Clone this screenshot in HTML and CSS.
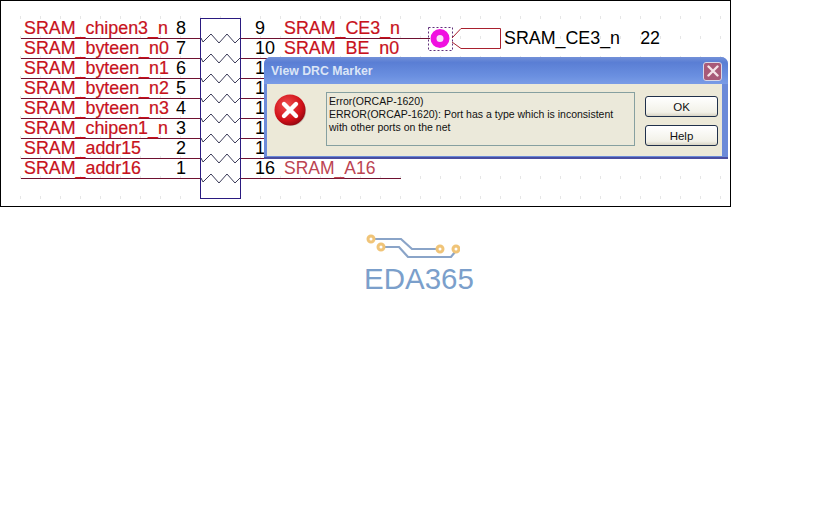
FILE: index.html
```html
<!DOCTYPE html>
<html lang="en">
<head>
<meta charset="utf-8">
<title>View DRC Marker</title>
<link rel="stylesheet" href="styles.css">
</head>
<body>
<main class="schematic">
  <svg class="wires" width="729" height="205" viewBox="1 1 729 205" aria-hidden="true">
    <defs>
      <pattern id="grid" x="0" y="16" width="20" height="20" patternUnits="userSpaceOnUse">
        <rect x="0" y="0" width="1" height="3" fill="#e6e6e6"/>
      </pattern>
      <path id="res" d="M201 38L203 42L211 34L219 43L227 34L235 43L240 38" fill="none" stroke="#3a3a58" stroke-width="1"/>
    </defs>
    <rect x="1" y="1" width="729" height="205" fill="url(#grid)"/>
    <g class="wire">
      <path d="M21 38.5H200M21 58.5H200M21 78.5H200M21 98.5H200M21 118.5H200M21 138.5H200M21 158.5H200M21 178.5H200"/>
      <path d="M241 38.5H430M241 58.5H401M241 78.5H300M241 98.5H300M241 118.5H300M241 138.5H300M241 158.5H300M241 178.5H401"/>
    </g>
    <rect x="200.5" y="18.5" width="40" height="180" fill="#fff" stroke="#2a1a80"/>
    <use href="#res"/>
    <use href="#res" y="20"/>
    <use href="#res" y="40"/>
    <use href="#res" y="60"/>
    <use href="#res" y="80"/>
    <use href="#res" y="100"/>
    <use href="#res" y="120"/>
    <use href="#res" y="140"/>
    <rect x="428.5" y="27.5" width="24" height="23" fill="none" stroke="#60307a" stroke-dasharray="2 2"/>
    <circle cx="440" cy="38.500" r="6.500" fill="#f8e0f8" stroke="#f010e0" stroke-width="6"/>
    <path d="M452 38L461 28.500H500.500V48.500H461L452 42" fill="none" stroke="#a8202e"/>
  </svg>

  <div class="pins">
    <div class="pin"><span class="net">SRAM_chipen3_n</span><span class="num">8</span></div>
    <div class="pin"><span class="net">SRAM_byteen_n0</span><span class="num">7</span></div>
    <div class="pin"><span class="net">SRAM_byteen_n1</span><span class="num">6</span></div>
    <div class="pin"><span class="net">SRAM_byteen_n2</span><span class="num">5</span></div>
    <div class="pin"><span class="net">SRAM_byteen_n3</span><span class="num">4</span></div>
    <div class="pin"><span class="net">SRAM_chipen1_n</span><span class="num">3</span></div>
    <div class="pin"><span class="net">SRAM_addr15</span><span class="num">2</span></div>
    <div class="pin"><span class="net">SRAM_addr16</span><span class="num">1</span></div>
  </div>

  <div class="pins pins-right">
    <div class="pin"><span class="num">9</span><span class="net">SRAM_CE3_n</span></div>
    <div class="pin"><span class="num">10</span><span class="net">SRAM_BE_n0</span></div>
    <div class="pin"><span class="num">1</span></div>
    <div class="pin"><span class="num">1</span></div>
    <div class="pin"><span class="num">1</span></div>
    <div class="pin"><span class="num">1</span></div>
    <div class="pin"><span class="num">1</span></div>
    <div class="pin"><span class="num">16</span><span class="net net-faded">SRAM_A16</span></div>
  </div>

  <div class="port-label"><span>SRAM_CE3_n</span><span>22</span></div>

  <section class="dialog">
    <header class="titlebar">
      <span class="title">View DRC Marker</span>
      <span class="close">
        <svg width="12" height="12" viewBox="0 0 12 12" aria-hidden="true"><path d="M1.500 1.500L10.500 10.500M10.500 1.500L1.500 10.500" stroke="#f4e4e8" stroke-width="2.400" stroke-linecap="round"/></svg>
      </span>
    </header>
    <div class="dialog-body">
      <svg class="err-icon" width="34" height="34" viewBox="0 0 34 34" aria-hidden="true">
        <defs>
          <radialGradient id="red" cx="40%" cy="35%" r="70%">
            <stop offset="0" stop-color="#f05050"/>
            <stop offset=".7" stop-color="#d01018"/>
            <stop offset="1" stop-color="#8c0610"/>
          </radialGradient>
        </defs>
        <circle cx="18" cy="18" r="15" fill="#a8a498" opacity=".6"/>
        <circle cx="17" cy="17" r="15.500" fill="url(#red)"/>
        <path d="M11 11L23 23M23 11L11 23" stroke="#fff" stroke-width="4.400" stroke-linecap="round"/>
      </svg>
      <div class="message">
        <p>Error(ORCAP-1620)</p>
        <p>ERROR(ORCAP-1620): Port has a type which is inconsistent with other ports on the net</p>
      </div>
      <div class="actions">
        <button class="btn" type="button">OK</button>
        <button class="btn" type="button">Help</button>
      </div>
    </div>
  </section>
</main>

<div class="logo">
  <svg width="96" height="30" viewBox="365 233 96 30" aria-hidden="true">
    <g fill="none" stroke="#8aa4c8" stroke-width="2.200">
      <path d="M376 239H402L413 249H438"/>
      <path d="M386 247H400L409 257H452L456 252"/>
    </g>
    <g fill="#fff" stroke="#f0c478" stroke-width="3">
      <circle cx="372" cy="239" r="3"/>
      <circle cx="382" cy="247" r="3"/>
      <circle cx="441" cy="249" r="3"/>
      <circle cx="457" cy="249" r="3"/>
    </g>
  </svg>
  <span class="logo-text">EDA365</span>
</div>
</body>
</html>
```
FILE: styles.css
```css
* { box-sizing: border-box; }

html, body {
  margin: 0;
  padding: 0;
  background: #fff;
  overflow: hidden;
}

body {
  width: 840px;
  height: 525px;
  font-family: "Liberation Sans", Arial, sans-serif;
}

.schematic {
  position: relative;
  display: flex;
  width: 731px;
  height: 207px;
  padding: 17px 0 0 23px;
  gap: 55px;
  border: 1px solid #000;
  background: #fff;
}

.wires {
  position: absolute;
  left: 0;
  top: 0;
}

.wire path {
  fill: none;
  stroke: #6e1030;
  stroke-width: 1;
}

.pins {
  position: relative;
  display: flex;
  flex-direction: column;
  width: 176px;
}

.pins-right { width: 180px; }

.pin {
  display: flex;
  height: 20px;
  font-size: 17.850px;
  line-height: 20px;
  white-space: nowrap;
}

.pins .net {
  width: 152px;
  color: #c8121c;
  -webkit-text-stroke: .2px #c8121c;
}

.pins .num {
  width: 24px;
  color: #000;
  font-size: 18px;
}

.pins-right .num { width: 29px; }

.pins-right .net { width: auto; }

.pins-right .net-faded {
  color: #bc4452;
  -webkit-text-stroke: 0;
  font-size: 17.500px;
}

.port-label {
  position: absolute;
  left: 503px;
  top: 27px;
  display: flex;
  width: 156px;
  justify-content: space-between;
  color: #000;
  font-size: 17.850px;
  line-height: 20px;
}

.dialog {
  position: absolute;
  left: 263px;
  top: 56px;
  display: flex;
  flex-direction: column;
  width: 464px;
  height: 102px;
  border-radius: 7px 7px 0 0;
  background: #6b8ad8;
  box-shadow: inset 0 -2px 0 #4a4ea0;
}

.titlebar {
  display: flex;
  align-items: center;
  justify-content: space-between;
  height: 27px;
  padding: 1px 6px 0 7px;
  border-radius: 7px 7px 0 0;
  background: linear-gradient(#7391d8 0, #5a7ed4 20%, #6a8fe0 70%, #7a9ce6 100%);
}

.title {
  color: #dbe5f6;
  font-size: 12.300px;
  font-weight: 700;
}

.close {
  display: flex;
  align-items: center;
  justify-content: center;
  width: 19px;
  height: 19px;
  border: 1px solid #d8d8e8;
  border-radius: 3px;
  background: #a85a78;
}

.dialog-body {
  display: flex;
  align-items: flex-start;
  height: 72px;
  margin: 0 6px 0 3px;
  padding: 8px 9px 0 0;
  background: #ece9d8;
}

.err-icon {
  flex: none;
  margin: 1px 0 0 6px;
}

.message {
  flex: none;
  width: 309px;
  height: 54px;
  margin-left: 19px;
  padding: 2px 14px 3px 2px;
  border: 1px solid #86a0a0;
  background: #ebe9da;
  color: #111;
  font-size: 10.500px;
  line-height: 13px;
}

.message p { margin: 0; }

.actions {
  display: flex;
  flex-direction: column;
  gap: 8px;
  margin: 4px 0 0 10px;
}

.btn {
  width: 73px;
  height: 21px;
  padding: 0;
  border: 1px solid #20304a;
  border-radius: 3px;
  background: linear-gradient(#fff, #f2f1e8 80%, #d8d4c4);
  color: #111;
  font-family: "Liberation Sans", Arial, sans-serif;
  font-size: 11.500px;
}

.logo {
  display: flex;
  flex-direction: column;
  width: 112px;
  margin: 26px 0 0 364px;
}

.logo svg { display: block; }

.logo-text {
  margin-top: 0;
  color: #7b9fcb;
  font-size: 29.500px;
  line-height: 32px;
}
```
